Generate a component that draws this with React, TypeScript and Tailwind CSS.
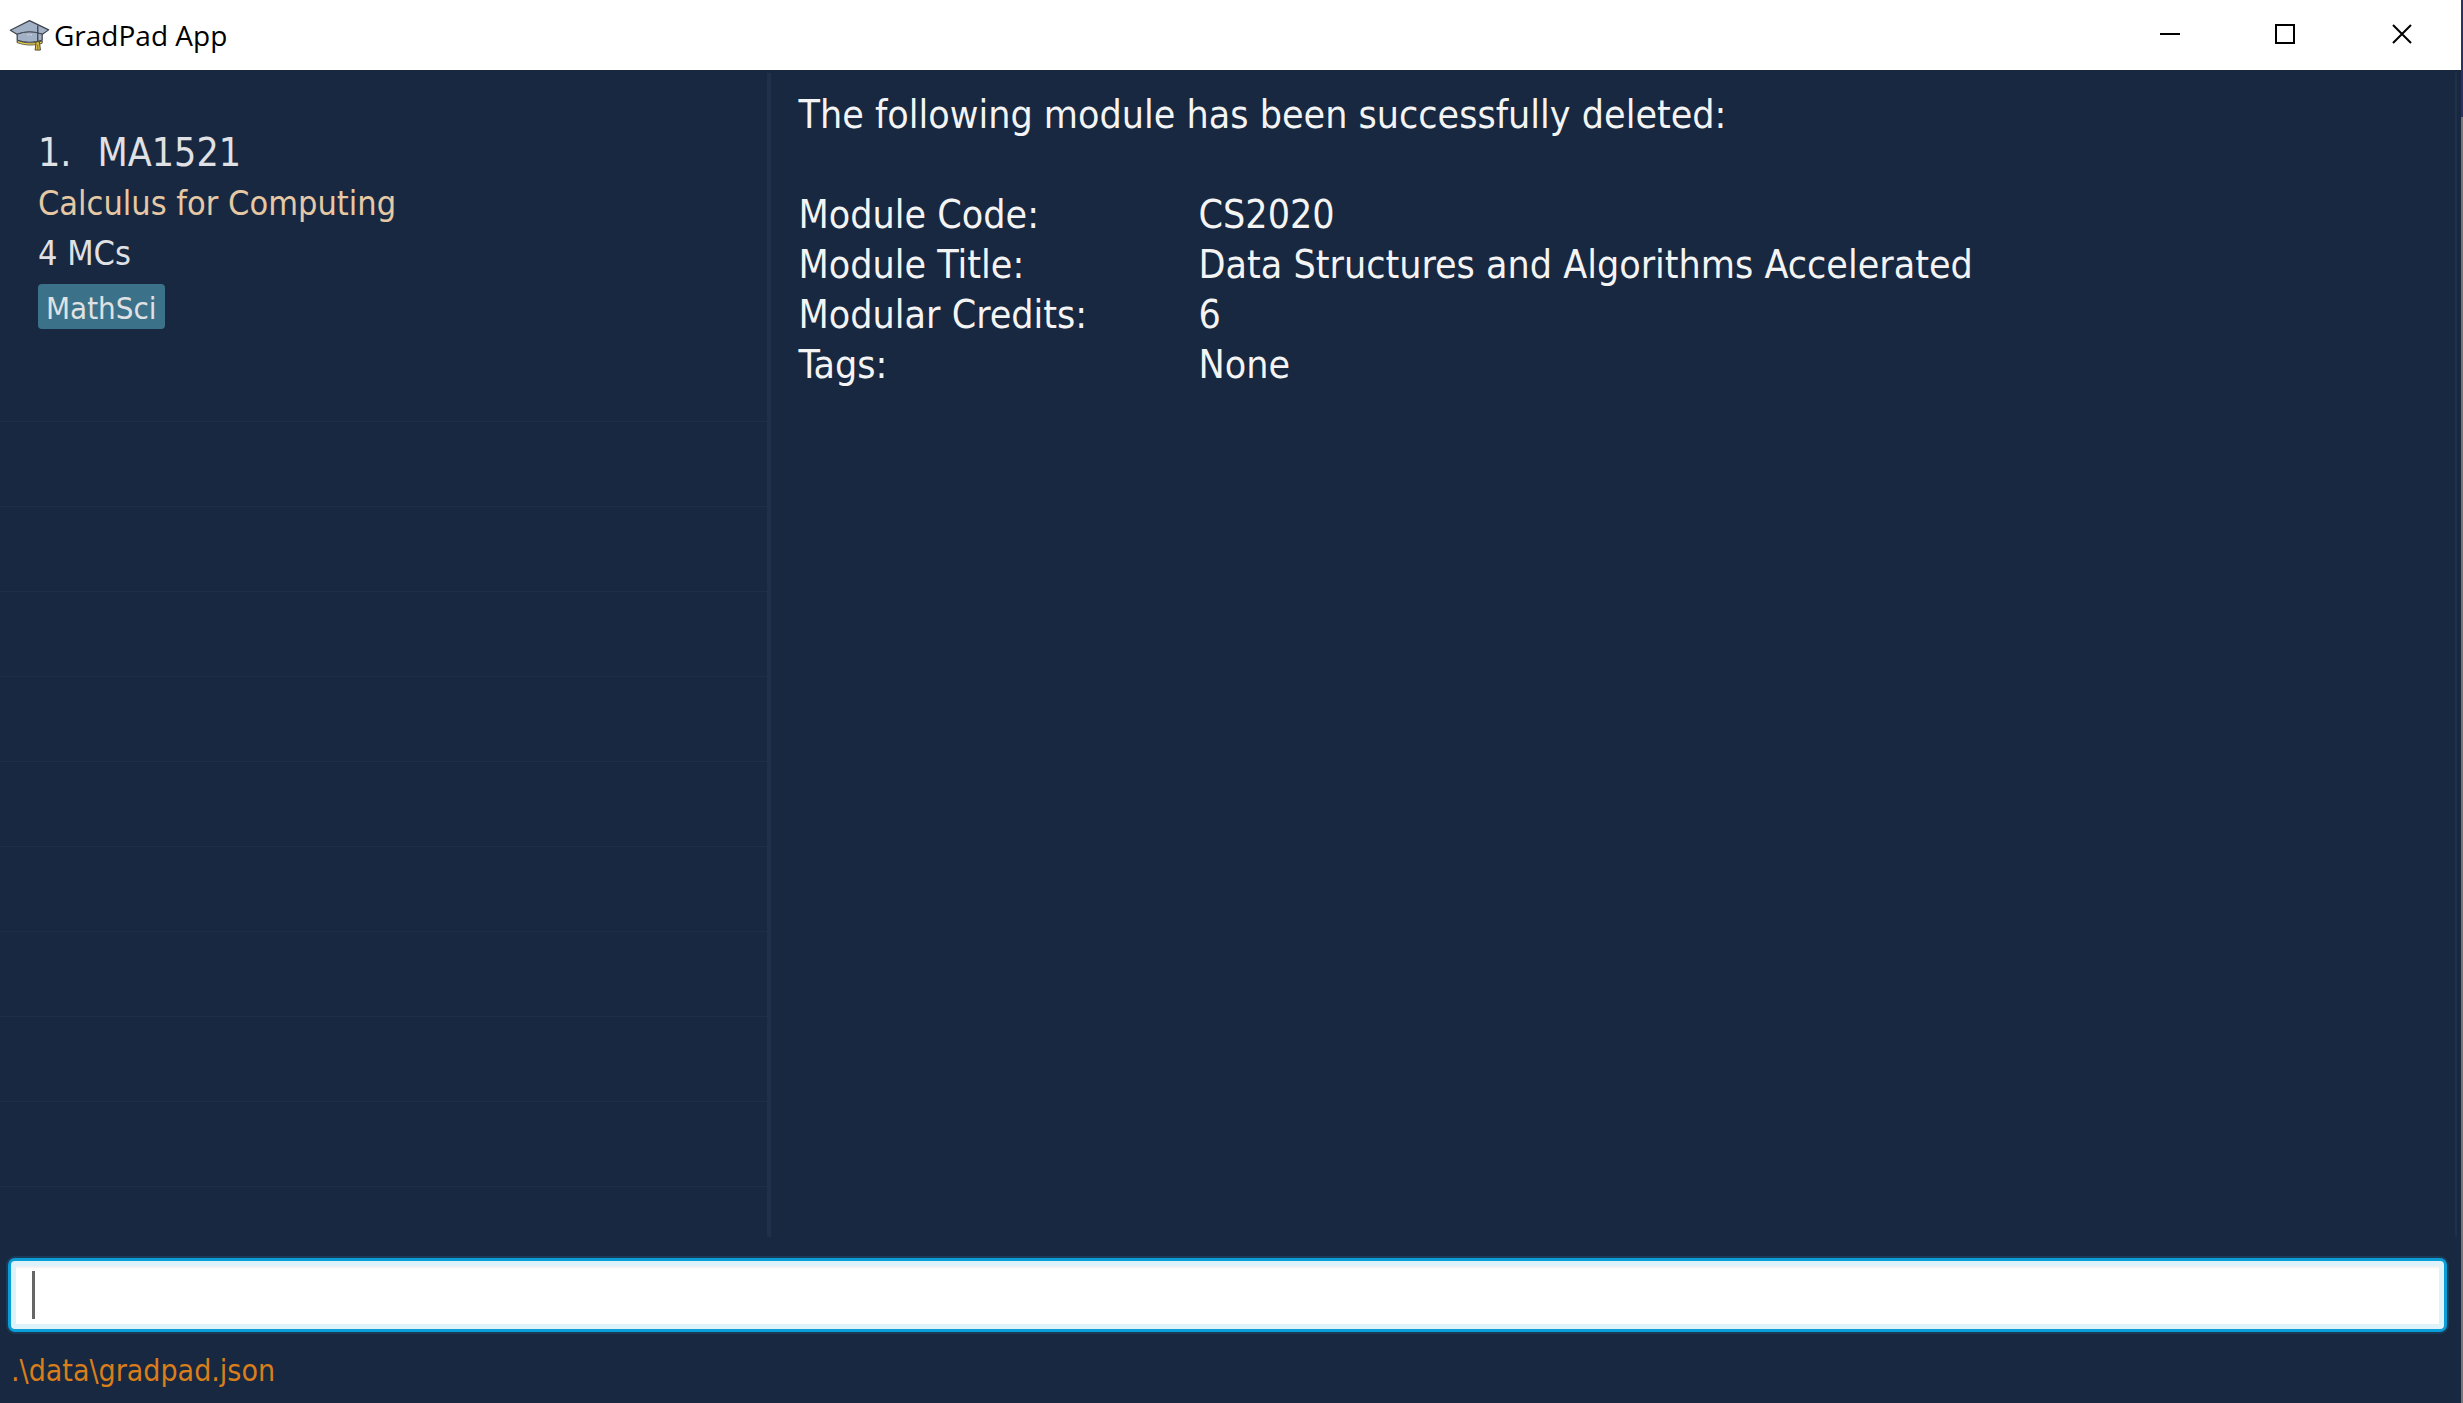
const moduleDetails = [
  { label: 'Module Code:', value: 'CS2020' },
  { label: 'Module Title:', value: 'Data Structures and Algorithms Accelerated' },
  { label: 'Modular Credits:', value: '6' },
  { label: 'Tags:', value: 'None' },
];

const emptyRows = Array.from({ length: 9 }, (_, i) => i);

function GraduationCap() {
  return (
    <svg viewBox="14 24 124 98" className="h-[33px] w-[41px]" aria-hidden="true">
      <path
        d="M39 66V94Q76 86 114 94V66Z"
        fill="#a3b1c6"
        stroke="#3c434c"
        strokeWidth="3"
        strokeLinejoin="round"
      />
      <path d="M39 88Q76 102 114 90V97Q76 108 39 95Z" fill="#e6cf52" stroke="#4d4a34" strokeWidth="2.5" />
      <path
        d="M76 28L134 56L115 69Q76 56 38 69L18 57Z"
        fill="#a3b1c6"
        stroke="#3c434c"
        strokeWidth="3.5"
        strokeLinejoin="round"
      />
      <path d="M39 69Q76 55 114 69V87Q76 100 39 87Z" fill="#a3b1c6" stroke="#3c434c" strokeWidth="3" />
      <path d="M101 43V93" fill="none" stroke="#3c434c" strokeWidth="4" />
      <path d="M96 92H106L109 117H93Z" fill="#d9bf45" stroke="#4d4a34" strokeWidth="3" strokeLinejoin="round" />
      <path d="M101 100V116" stroke="#4d4a34" strokeWidth="2" />
      <path d="M70 71H74M79 71H83" stroke="#e8eef6" strokeWidth="3" />
    </svg>
  );
}

function TitleBar() {
  return (
    <header className="flex h-[70px] items-center justify-between bg-white text-black">
      <div className="flex items-center gap-1 pl-[9px]">
        <GraduationCap />
        <h1 className="font-['Open_Sans',sans-serif] text-[28px] leading-[40px]">GradPad App</h1>
      </div>
      <div className="flex h-full items-stretch pr-px">
        <button type="button" aria-label="Minimize" className="flex w-[116px] items-center justify-center">
          <svg viewBox="0 0 20 20" className="size-5" aria-hidden="true">
            <path d="M0 9H20" stroke="#000" strokeWidth="2" />
          </svg>
        </button>
        <button type="button" aria-label="Maximize" className="flex w-[116px] items-center justify-center">
          <svg viewBox="0 0 20 20" className="size-5 overflow-visible" aria-hidden="true">
            <path d="M0 0H18V18H0Z" fill="none" stroke="#000" strokeWidth="2" />
          </svg>
        </button>
        <button type="button" aria-label="Close" className="flex w-[116px] items-center justify-center">
          <svg viewBox="0 0 20 20" className="size-5 overflow-visible" aria-hidden="true">
            <path d="M1 0L19 18M19 0L1 18" stroke="#000" strokeWidth="2" />
          </svg>
        </button>
      </div>
    </header>
  );
}

function ModuleList() {
  return (
    <ul className="flex w-[31.2%] flex-col text-[34px] leading-[50px] text-[#e0e1e4]">
      <li className="h-[349px] border-b border-[#202e49] pt-[55px] pl-[38px]">
        <div className="flex gap-[26px] text-[39px]">
          <span>1.</span>
          <span>MA1521</span>
        </div>
        <div className="text-[#e6c8a5]">Calculus for Computing</div>
        <div>4 MCs</div>
        <div className="mt-[6px] inline-block rounded-[4px] bg-[#3b7289] px-2 pt-1 text-[31px] leading-[41px]">
          MathSci
        </div>
      </li>
      {emptyRows.map((row) => (
        <li key={row} className="h-[85px] border-b border-[#202e49]" />
      ))}
    </ul>
  );
}

function ResultDisplay() {
  return (
    <section className="grow border-r-2 border-l-4 border-[#202f4a] pt-[17px] pl-7 text-[39px] leading-[50px] text-[#f4f4f4]">
      <p>The following module has been successfully deleted:</p>
      <dl className="mt-[50px] grid grid-cols-[400px_1fr]">
        {moduleDetails.map(({ label, value }) => (
          <div key={label} className="col-span-2 grid grid-cols-subgrid">
            <dt>{label}</dt>
            <dd>{value}</dd>
          </div>
        ))}
      </dl>
    </section>
  );
}

export default function App() {
  return (
    <div className="flex min-h-screen bg-[#182841] font-['DejaVu_Sans_Condensed','DejaVu_Sans',sans-serif]">
      <div className="flex grow flex-col">
        <TitleBar />
        <main className="flex grow flex-col">
          <div className="mr-1 flex grow pt-[3px]">
            <ModuleList />
            <ResultDisplay />
          </div>
          <form className="relative mt-[21px] mr-[14px] ml-2" onSubmit={(e) => e.preventDefault()}>
            <input
              type="text"
              aria-label="Command"
              className="block h-[74px] w-full rounded-[7px] border-3 border-[#0a9dd6] bg-white px-[22px] text-[39px] text-[#222] caret-transparent shadow-[inset_0_0_0_5px_#def2fa,inset_0_7px_2px_#f2f2f2,0_0_0_2px_#1a3a57] outline-none"
            />
            <span className="pointer-events-none absolute top-[13px] left-6 h-12 w-[3px] bg-[#666]" />
          </form>
        </main>
        <footer className="px-[11px] pt-[17px] pb-[10px] text-[30px] leading-[44px] text-[#d97e1a]">
          .\data\gradpad.json
        </footer>
      </div>
      <div className="flex w-[2px] flex-col">
        <div className="h-[117px] bg-[#2c3160]" />
        <div className="grow bg-[#77777a]" />
      </div>
    </div>
  );
}
